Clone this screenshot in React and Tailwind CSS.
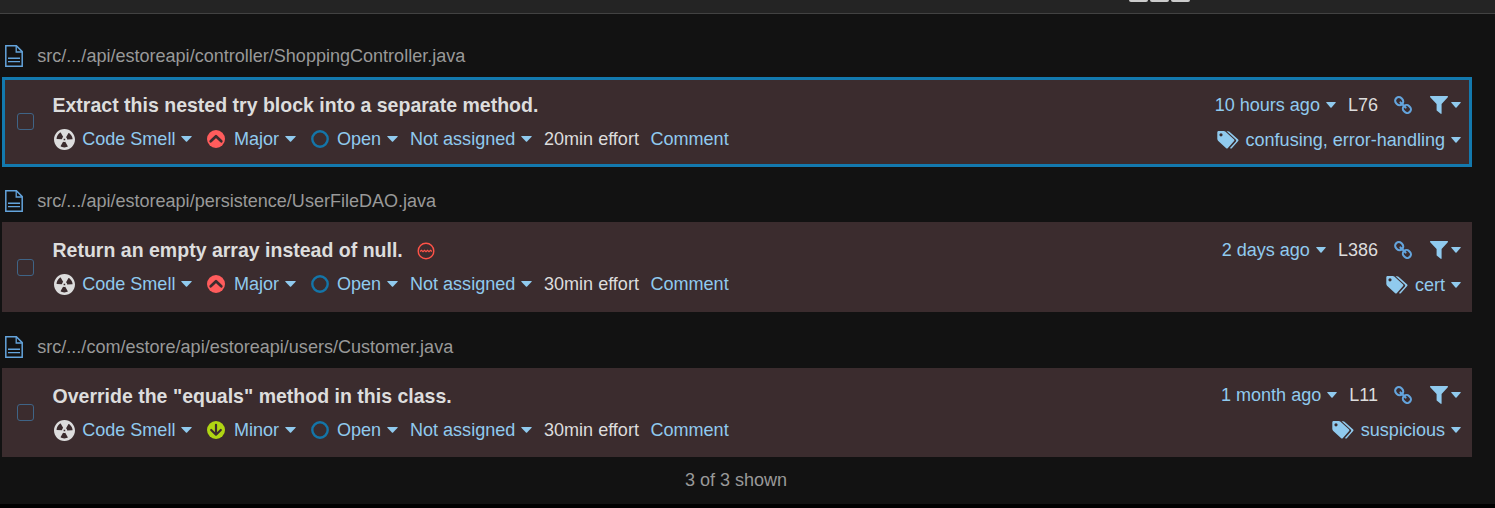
const FONT = "font-['Liberation_Sans',Arial,sans-serif]";

function Caret({ width = 11 }) {
  return (
    <svg className="block shrink-0" width={width} height="6" viewBox="0 0 11 6" preserveAspectRatio="none" fill="#90caee">
      <path d="M.6 0h9.8q.6.2.2.8L6.1 5.6q-.6.5-1.2 0L.4.8Q0 .2.6 0z" />
    </svg>
  );
}

function FileIcon() {
  return (
    <svg className="block shrink-0" width="18" height="22" viewBox="0 0 18 22" fill="none" stroke="#64a4dc" strokeWidth="1.5">
      <path d="M.8.8h10.6l5.8 5.8v14.6H.8z" />
      <path d="M11.2 1v6h6" strokeWidth="1.3" />
      <path d="M3 13.2h12M3 16.6h12" strokeWidth="1.4" />
    </svg>
  );
}

function CodeSmellIcon() {
  return (
    <svg className="block shrink-0" width="21" height="21" viewBox="2 2 12 12" fill="#dddddd">
      <path d="M8 2C4.7 2 2 4.7 2 8s2.7 6 6 6 6-2.7 6-6-2.7-6-6-6zm-.5 5.5h.9v.9h-.9v-.9zm-3.8.2c-.1 0-.2-.1-.2-.2 0-.4.1-1.2.6-2S5.3 4.2 5.6 4c.2 0 .3 0 .3.1l1.3 2.3c0 .1 0 .2-.1.2-.1.2-.2.3-.3.5-.1.2-.2.4-.2.5 0 .1-.1.2-.2.2l-2.7-.1zM9.9 12c-.3.2-1.1.5-2 .5-.9 0-1.7-.3-2-.5-.1 0-.1-.2-.1-.3l1.3-2.3c0-.1.1-.1.2-.1.2.1.3.1.5.1s.4 0 .5-.1c.1 0 .2 0 .2.1l1.3 2.3c.2.2.2.3.1.3zm2.5-4.1L9.7 8c-.1 0-.2-.1-.2-.2 0-.2-.1-.4-.2-.5 0-.1-.2-.3-.3-.4-.1 0-.1-.1-.1-.2l1.3-2.3c.1-.1.2-.1.3-.1.3.2 1 .7 1.5 1.5s.6 1.6.6 2c0 0-.1.1-.2.1z" />
    </svg>
  );
}

function SeverityIcon({ level }) {
  if (level === "Major") {
    return (
      <svg className="block shrink-0" width="18" height="18" viewBox="0 0 18 18">
        <circle cx="9" cy="9" r="9" fill="#ff5c5c" />
        <path d="M3.7 11.2 9 6.2l5.3 5" fill="none" stroke="#3b2c2e" strokeWidth="2.7" strokeLinecap="round" strokeLinejoin="round" />
      </svg>
    );
  }
  return (
    <svg className="block shrink-0" width="18" height="18" viewBox="0 0 18 18">
      <circle cx="9" cy="9" r="9" fill="#b0d513" />
      <path d="M9 3.8v9.2M4.2 9 9 13.7 13.8 9" fill="none" stroke="#3b2c2e" strokeWidth="2.2" strokeLinecap="round" strokeLinejoin="round" />
    </svg>
  );
}

function OpenIcon() {
  return (
    <svg className="block shrink-0" width="18" height="18" viewBox="0 0 18 18" fill="none" stroke="#1475a8" strokeWidth="2.4">
      <circle cx="9" cy="9" r="7.7" />
    </svg>
  );
}

function EngineIcon() {
  return (
    <svg className="mt-[2px] block shrink-0" width="18" height="18" viewBox="0 0 18 18" fill="none" stroke="#ff5348">
      <circle cx="9" cy="9" r="7.8" strokeWidth="1.4" />
      <path d="M3 9.5 4.5 8.2 6 9.6 7.5 8.2 9 9.6l1.5-1.4L12 9.6l1.5-1.4L15 9.5" strokeWidth="1.2" />
    </svg>
  );
}

function LinkIcon() {
  return (
    <svg className="block shrink-0" width="18" height="18" viewBox="0 0 18 18" fill="none" stroke="#64a4dc" strokeWidth="2.1">
      <rect x="1.1" y="1.5" width="8.2" height="7.2" rx="3.4" transform="rotate(45 5.2 5.1)" />
      <rect x="8.8" y="9.4" width="8.2" height="7.2" rx="3.4" transform="rotate(45 12.9 13)" />
      <path d="m6.4 6.4 5.2 5.2" strokeLinecap="round" />
    </svg>
  );
}

function FilterIcon() {
  return (
    <svg className="block shrink-0" width="18" height="18" viewBox="0 0 18 18" fill="#90caee">
      <path d="M.4 0h17.2q.6.5.2 1.2L11.6 8v9.6q-.3.6-.9.2L7 14.8q-.4-.3-.4-.8V8L.2 1.2Q-.2.5.4 0z" />
    </svg>
  );
}

function TagsIcon() {
  return (
    <svg className="block shrink-0" width="22" height="18" viewBox="0 0 22 18" fill="#90caee">
      <path fillRule="evenodd" d="M1.2 0h5.6q.9.1 1.5.6l8.8 8q.7.8 0 1.5l-6.4 7.2q-.8.6-1.5 0L1 9.7Q.4 9 .3 8.1V1.2Q.3.2 1.2 0zM4 2.2a1.6 1.6 0 1 0 0 3.2 1.6 1.6 0 0 0 0-3.2z" />
      <path d="M9.6.2h1.4q.9.1 1.5.6l8.7 7.8q.7.8 0 1.5l-6.4 7.2q-.9.7-1.8-.2l5.9-6.6q.7-1 0-1.8z" />
    </svg>
  );
}

function Issue({
  file,
  title,
  engine,
  severity,
  effort,
  age,
  line,
  tags,
  selected,
  className,
  cardHeight = "h-[90px]",
  checkOffset = "pt-[33px]",
  sideOffset = "pt-[13px]",
}) {
  return (
    <section className={className}>
      <div className="flex h-[22px] items-center gap-[14.3px] pl-[5px]">
        <FileIcon />
        <span className="text-[#999999]">{file}</span>
      </div>
      <article
        className={`ml-[2px] mt-[10px] flex w-[1470px] border-[3px] bg-[#3b2c2e] ${cardHeight} ${
          selected ? "border-[#1379ae]" : "border-[#3b2c2e]"
        }`}
      >
        <div className={`flex w-[47.5px] shrink-0 items-start pl-3 ${checkOffset}`}>
          <span className="size-[17px] rounded-[3px] border border-[#3f6486]" />
        </div>
        <div className="flex grow flex-col pt-[13px]">
          <h3 className="flex h-[24px] items-center gap-[14.5px] text-[19.52px] font-bold text-[#dddddd]">
            {title}
            {engine && <EngineIcon />}
          </h3>
          <div className="mt-[10px] flex h-6 items-center pl-[1.5px] text-[#90caee]">
            <div className="flex w-[153px] items-center">
              <CodeSmellIcon />
              <span className="ml-[7.2px] w-[98.8px]">Code Smell</span>
              <Caret />
            </div>
            <div className="flex w-[104px] items-center">
              <SeverityIcon level={severity} />
              <span className="ml-[9px] w-[51px]">{severity}</span>
              <Caret />
            </div>
            <div className="flex w-[99px] items-center">
              <OpenIcon />
              <span className="ml-[8px] w-[50px]">Open</span>
              <Caret />
            </div>
            <div className="flex w-[134px] items-center">
              <span className="w-[111px]">Not assigned</span>
              <Caret />
            </div>
            <span className="w-[106.5px] text-[#dddddd]">{effort} effort</span>
            <span>Comment</span>
          </div>
        </div>
        <div className={`flex flex-col items-end pr-[8px] text-[#90caee] ${sideOffset}`}>
          <div className="flex h-[24px] items-center">
            <span className="mr-[6px]">{age}</span>
            <Caret width={10} />
            <span className="ml-[12px] mr-[16px] text-[#dddddd]">{line}</span>
            <LinkIcon />
            <span className="ml-[18px] mr-[3px]">
              <FilterIcon />
            </span>
            <Caret width={10} />
          </div>
          <div className="mt-[11px] flex h-6 items-center">
            <TagsIcon />
            <span className="ml-[7px] mr-[6px]">{tags}</span>
            <Caret width={10} />
          </div>
        </div>
      </article>
    </section>
  );
}

export default function App() {
  return (
    <div className={`h-[508px] w-[1495px] overflow-hidden border-b-4 border-black bg-[#121212] text-[18.04px] leading-6 whitespace-nowrap ${FONT}`}>
      <header className="flex h-[14px] items-start gap-[2px] border-b border-[#424242] bg-[#242424] pl-[1129px]">
        <span className="h-[2px] w-[19px] rounded-b-[3px] bg-[#cccccc]" />
        <span className="h-[2px] w-[19px] rounded-b-[3px] bg-[#cccccc]" />
        <span className="h-[2px] w-[19px] rounded-b-[3px] bg-[#cccccc]" />
      </header>
      <main>
        <Issue
          className="mt-[31px]"
          file="src/.../api/estoreapi/controller/ShoppingController.java"
          title="Extract this nested try block into a separate method."
          severity="Major"
          effort="20min"
          age="10 hours ago"
          line="L76"
          tags="confusing, error-handling"
          selected
        />
        <Issue
          className="mt-[23px]"
          file="src/.../api/estoreapi/persistence/UserFileDAO.java"
          title="Return an empty array instead of null."
          engine
          severity="Major"
          effort="30min"
          age="2 days ago"
          line="L386"
          tags="cert"
          checkOffset="pt-[34px]"
        />
        <Issue
          className="mt-[24px]"
          file="src/.../com/estore/api/estoreapi/users/Customer.java"
          title={'Override the "equals" method in this class.'}
          severity="Minor"
          effort="30min"
          age="1 month ago"
          line="L11"
          tags="suspicious"
          cardHeight="h-[89px]"
          sideOffset="pt-[12px]"
        />
        <p className="mt-[11px] w-[1472px] text-center text-[#999999]">3 of 3 shown</p>
      </main>
    </div>
  );
}
